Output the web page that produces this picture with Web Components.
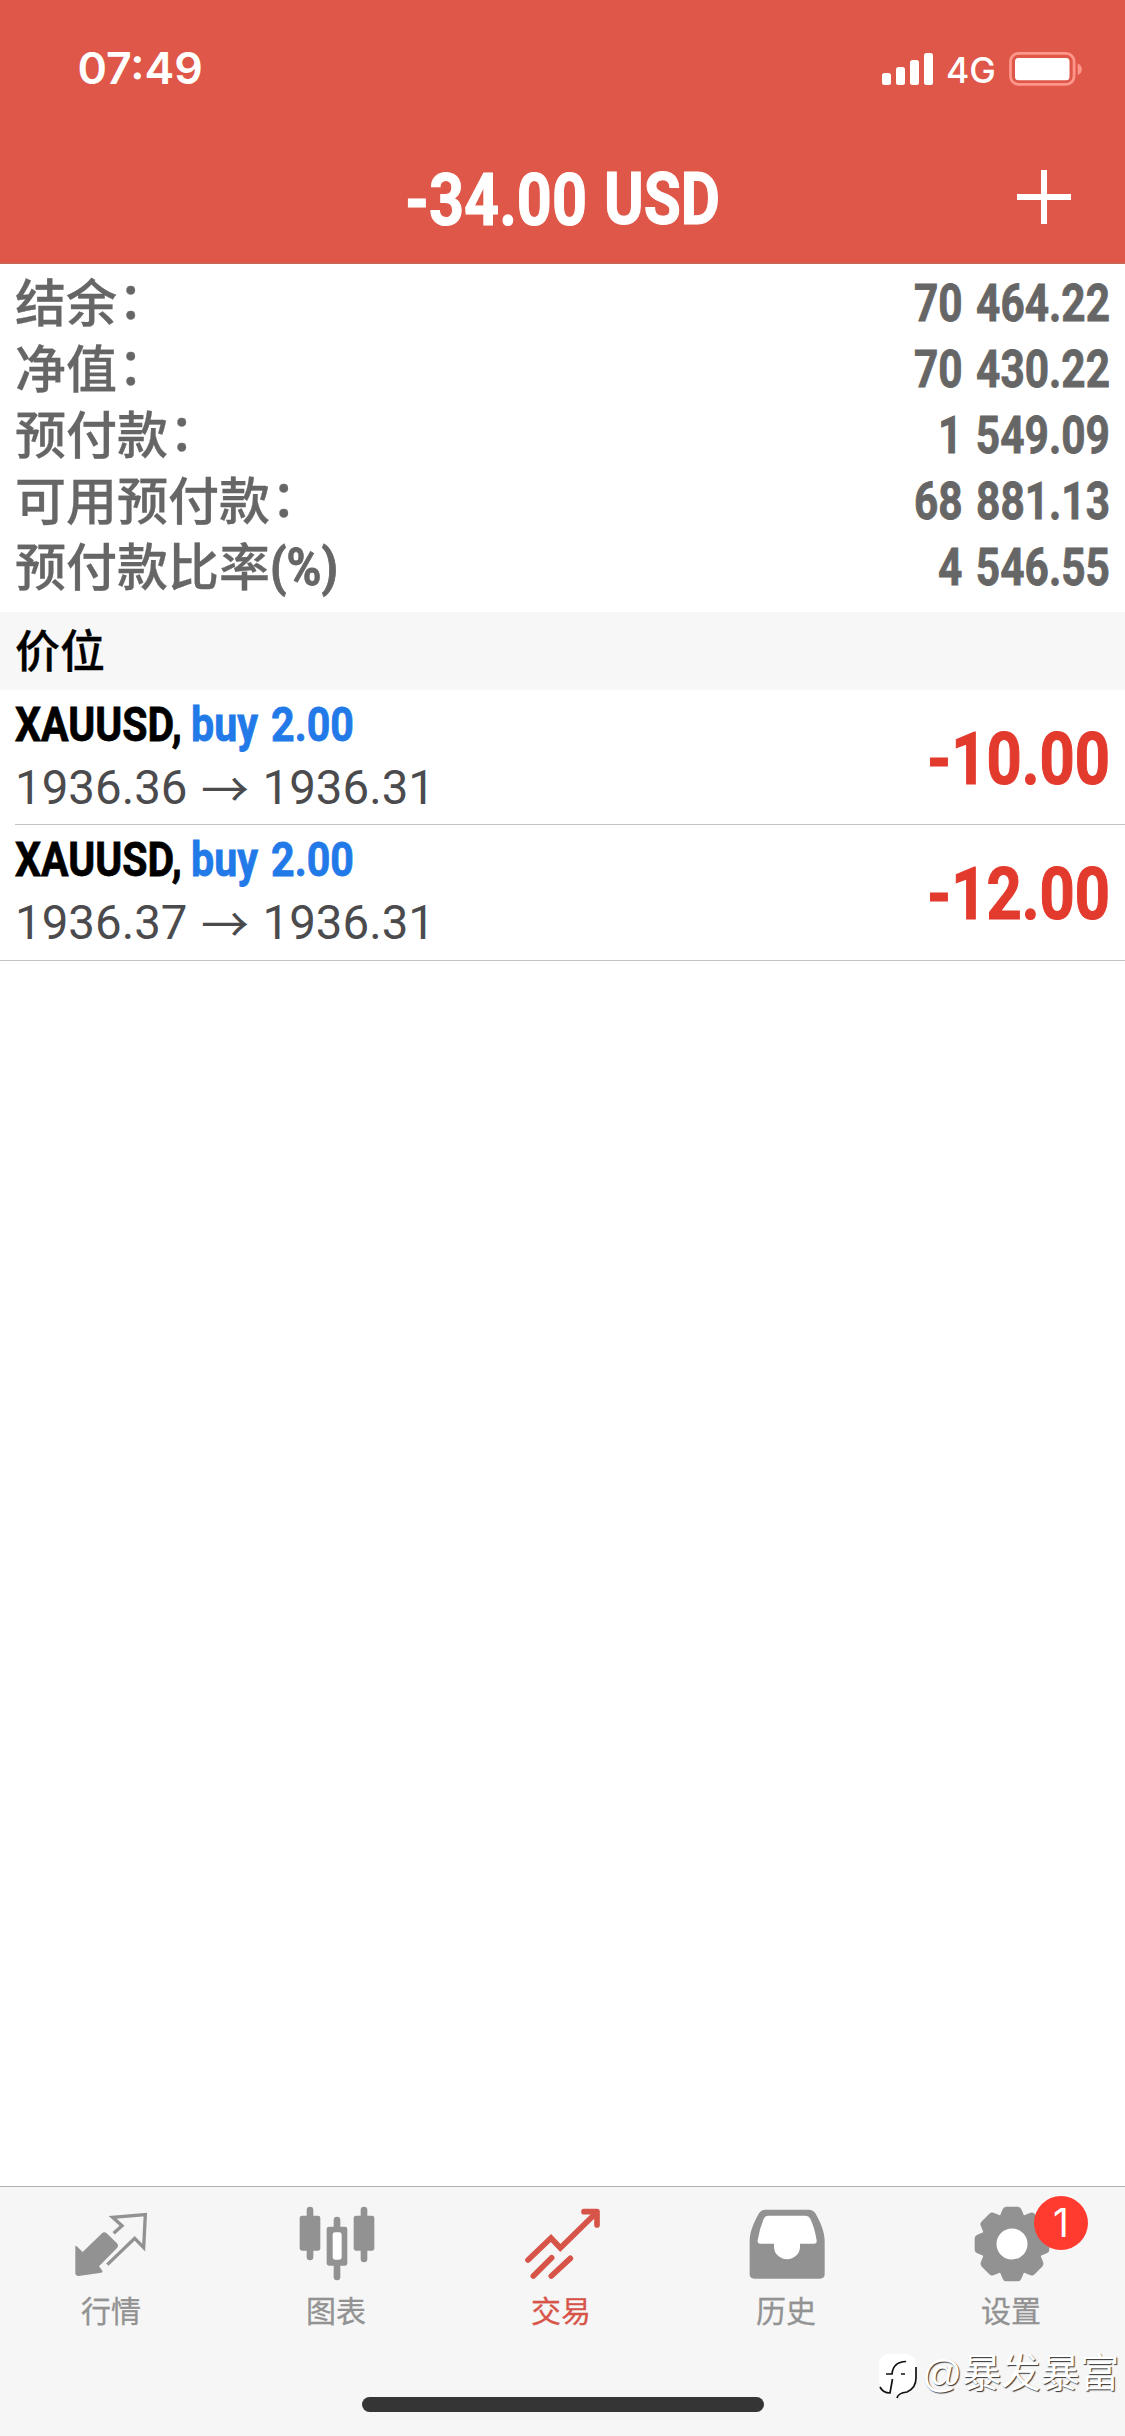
<!DOCTYPE html>
<html lang="zh-CN">
<head>
<meta charset="utf-8">
<title>Trade</title>
<style>
html,body{margin:0;padding:0;background:#fff}
body{font-family:Roboto,"Noto Sans CJK SC",sans-serif}
</style>
</head>
<body>
<trade-app></trade-app>
<script>
const define = (name, render) => customElements.define(name, class extends HTMLElement {
  connectedCallback() {
    if (this.shadowRoot) return;
    this.attachShadow({ mode: 'open' }).innerHTML = render(this);
  }
});
const a = (el, n, d = '') => el.getAttribute(n) ?? d;

// Condensed text: the font size is set so that the text is w wide, then the glyphs
// are stretched upwards from the baseline to the height of the nominal size.
const halfLead = { Roboto: 0.3418, Inter: 0.3638 };
const wordGap = 0.07;
customElements.define('fit-text', class extends HTMLElement {
  connectedCallback() {
    if (this.shadowRoot) return;
    const font = a(this, 'font', 'Roboto'), weight = a(this, 'weight', '700');
    const w = +a(this, 'w'), h = +a(this, 'h'), base = +a(this, 'base'), size = +a(this, 'size');
    const ctx = document.createElement('canvas').getContext('2d');
    ctx.font = `${weight} 100px ${font}`;
    const spaces = this.textContent.split(' ').length - 1;
    const fs = w / (ctx.measureText(this.textContent).width / 100 + spaces * wordGap);
    const asc = (0.5 + halfLead[font]) * fs;
    this.attachShadow({ mode: 'open' }).innerHTML = `
<style>:host{display:flow-root;flex:none;width:${w}px;height:${h}px}
span{display:block;white-space:nowrap;word-spacing:${wordGap}em;font:${weight} ${fs}px/${fs}px ${font},sans-serif;height:${fs}px;
margin-top:${base - asc}px;transform-origin:0 ${asc}px;transform:scaleY(${size / fs})${weight === '700' ? ';-webkit-text-stroke:.016em currentColor' : ''}}</style>
<span><slot></slot></span>`;
  }
});

define('status-bar', () => `
<style>:host{display:flex;justify-content:space-between;height:132px;padding:0 42px 0 77.500px;box-sizing:border-box;color:#fff}
.r{display:flex}svg{display:block}</style>
<fit-text w="125.500" h="132" base="85" size="44" weight="600" font="Inter">07:49</fit-text>
<div class="r">
<svg width="64" height="132" fill="#fff"><rect x="0" y="73" width="9" height="12" rx="2.5"/><rect x="14" y="67" width="9" height="18" rx="2.5"/><rect x="28" y="60" width="9" height="25" rx="2.5"/><rect x="42" y="53" width="9" height="32" rx="2.5"/></svg>
<fit-text w="50" h="132" base="83.500" size="35.5" weight="500" font="Inter">4G</fit-text>
<svg width="87" height="132"><rect x="14.5" y="53.3" width="63.6" height="31" rx="8" fill="none" stroke="#ff968a" stroke-width="2.8"/><rect x="19" y="58" width="54.5" height="22.3" rx="3.5" fill="#fff"/><path d="M81.7 63.5c5.5 2 5.5 9.500 0 11.500z" fill="#ff968a"/></svg>
</div>`);

define('title-bar', () => `
<style>:host{display:grid;grid-template-columns:1fr auto 1fr;height:132px;color:#fff;box-sizing:border-box;border-bottom:1px solid #c3695a}
.t{display:flex;gap:17px}svg{display:block;justify-self:end;margin-right:54px}</style>
<span></span>
<div class="t"><fit-text w="182" h="131" base="93" size="72">-34.00</fit-text><fit-text w="116" h="131" base="93" size="72">USD</fit-text></div>
<svg width="54" height="131"><path d="M0 65H54M27 38V92" stroke="#fff" stroke-width="6"/></svg>`);

define('summary-row', el => `
<style>:host{display:flex;height:66px;color:#666}
.l{flex:1;display:flex;font:500 51px/57px "Noto Sans CJK SC",sans-serif;-webkit-text-stroke:.3px currentColor}
.c{display:inline-block;line-height:50px;padding-left:1px}</style>
<div class="l"><span><slot></slot></span>${el.hasAttribute('unit') ? `<fit-text w="68" h="66" base="50" size="51">${a(el,'unit')}</fit-text>` : '<span class="c">：</span>'}</div>
<fit-text w="${a(el,'w')}" h="66" base="50" size="51">${a(el,'value')}</fit-text>`);

define('account-summary', () => `
<style>:host{display:block;padding:8px 15px 10px}</style>
<summary-row value="70 464.22" w="196">结余</summary-row>
<summary-row value="70 430.22" w="196">净值</summary-row>
<summary-row value="1 549.09" w="172">预付款</summary-row>
<summary-row value="68 881.13" w="196">可用预付款</summary-row>
<summary-row value="4 546.55" w="172" unit="(%)">预付款比率</summary-row>`);

define('section-head', () => `
<style>:host{display:block;height:78px;background:#f7f7f7;padding:0 15px;font:500 45px/74px "Noto Sans CJK SC",sans-serif;color:#000;-webkit-text-stroke:.3px currentColor}</style><slot></slot>`);

define('position-row', el => `
<style>:host{display:flex;height:135px;padding-left:15px}
.in{flex:1;display:flex;justify-content:space-between;padding-right:15px;border-bottom:1px solid #c3c3c6}
:host([last]){height:136px;padding-left:0}:host([last]) .in{padding-left:15px}
.a,.b{display:flex}.a{gap:9px}.s{color:#000}.buy{color:#2279e8}.b{color:#4b4b4e}.p{color:#e33a2e}
.arr{width:57px;margin:0 9px 0 9px;font:400 48px/60px "Noto Sans CJK SC",sans-serif;text-align:center}</style>
<div class="in"><div>
<div class="a"><fit-text class="s" w="167" h="66" base="52" size="48">XAUUSD,</fit-text><fit-text class="buy" w="163" h="66" base="52" size="48">buy 2.00</fit-text></div>
<div class="b"><fit-text w="172.500" h="62" base="49" size="48" weight="400">${a(el,'from')}</fit-text><span class="arr">→</span><fit-text w="172.500" h="62" base="49" size="48" weight="400">${a(el,'to')}</fit-text></div>
</div><fit-text class="p" w="183" h="134" base="95" size="72">${a(el,'profit')}</fit-text></div>`);

// Icon artwork uses a 3-units-per-pixel grid, 240 units square
const tooth = '<path d="M-40-76L-28-104Q-25-112-17-112H17Q25-112 28-104L40-76Z"/>';
const icons = {
  quotes: `<path d="M4 125Q4 120 8 124L26 141 84 85Q91 78 98 85L129 115Q135 122 129 129L75 184 85 197Q87 202 82 203L14 213Q4 213 4 204Z"/><path d="M119 85L144 62 116 37 214 29 209 128 182 100 100 179" fill="none" stroke="currentColor" stroke-width="10"/>`,
  chart: `<rect x="23" y="5" width="20" height="161" rx="10"/><rect x="2" y="32" width="62" height="105" rx="7"/><rect x="104" y="35" width="20" height="191" rx="10"/><rect x="83" y="65" width="62" height="117" rx="7"/><rect x="101" y="82" width="27" height="82" rx="7" fill="#fff"/><rect x="185" y="5" width="20" height="167" rx="10"/><rect x="164" y="32" width="62" height="105" rx="7"/>`,
  trade: `<g fill="none" stroke="currentColor" stroke-width="17" stroke-linecap="round" stroke-linejoin="miter"><path d="M12 165L81 99 109 129 213 27"/><path d="M180 20H219V60" stroke-linejoin="round"/><path d="M28 213L83 158M82 213L139 160"/></g>`,
  history: `<path d="M49 14H179Q192 14 199 25C215 53 227 81 227 108V207Q227 221 213 221H16Q2 221 2 207V108C2 81 14 53 30 25Q36 14 49 14Z"/><path d="M58 32H170Q179 32 184 41Q197 69 203 106Q204 116 195 116H153V125A39 38 0 0 1 75 125V116H34Q25 116 26 106Q31 72 44 42Q48 32 58 32Z" fill="#fff"/>`,
  settings: `<g transform="translate(114 117)"><circle r="48" fill="#fff"/><circle r="67" fill="none" stroke="currentColor" stroke-width="41"/>${[0,1,2,3,4,5,6,7].map(i=>`<g transform="rotate(${i*45})">${tooth}</g>`).join('')}</g>`
};
define('tab-item', el => `
<style>:host{flex:1;display:flex;flex-direction:column;align-items:center;position:relative;color:#929292}
:host([active]){color:#d75449}svg{display:block;margin:16.500px 2px 0 0}
.t{font:400 30px/30px "Noto Sans CJK SC",sans-serif;margin:10.500px 3px 0 0;-webkit-text-stroke:.3px currentColor}
.badge{position:absolute;left:134px;top:9px;width:54px;height:54px;border-radius:50%;background:#ff3b30;color:#fff;font:400 39px/54px Inter,sans-serif;text-align:center}</style>
<svg width="80" height="80" viewBox="-6 -3 240 240" fill="currentColor">${icons[a(el,'icon')]}</svg>
<div class="t"><slot></slot></div>${el.hasAttribute('badge') ? `<div class="badge">${a(el,'badge')}</div>` : ''}`);

define('tab-bar', () => `
<style>:host{display:flex;flex-direction:column;height:250px;box-sizing:border-box;border-top:1px solid #b2b2b2;background:#f6f6f6}
nav{display:flex;height:210px}.home{width:402px;height:15px;border-radius:8px;background:#353535;margin:0 auto}</style>
<nav><tab-item icon="quotes">行情</tab-item><tab-item icon="chart">图表</tab-item><tab-item icon="trade" active>交易</tab-item><tab-item icon="history">历史</tab-item><tab-item icon="settings" badge="1">设置</tab-item></nav>
<div class="home"></div>`);

define('user-watermark', () => `
<style>:host{display:flex;align-items:flex-start;gap:5px;color:#fff}
svg{display:block;overflow:visible}
span{display:block;margin-top:-2px;font:400 39.500px/46px "Liberation Sans","Noto Sans CJK SC",sans-serif;letter-spacing:-.2px;white-space:nowrap;text-shadow:1px 1px 1px #333}</style>
<svg width="38" height="47" viewBox="0 0 38 47"><path d="M8 2H28Q37 3 37 14V27Q37 37 28 39L18 46V40L7 39Q0 36 0 27V13Q0 4 8 2Z" fill="#fff"/><g fill="none" stroke="#111" stroke-width="1.700"><path d="M7 22H13Q14 10 27 9.500M22 22H26M13.500 27L11 41Q4 41 1 35"/><path d="M37 15V26Q37 36 28 40Q19 41 18 46"/></g></svg>
<span>@暴发暴富</span>`);

define('trade-app', () => `
<style>:host{display:flex;flex-direction:column;width:1125px;height:2436px;position:relative;overflow:hidden;background:#fff}
header{background:#df5748}main{flex:1}
user-watermark{position:absolute;left:879px;top:2352px}</style>
<header><status-bar></status-bar><title-bar></title-bar></header>
<main><account-summary></account-summary><section-head>价位</section-head>
<position-row from="1936.36" to="1936.31" profit="-10.00"></position-row>
<position-row from="1936.37" to="1936.31" profit="-12.00" last></position-row></main>
<tab-bar></tab-bar><user-watermark></user-watermark>`);
</script>
</body>
</html>
